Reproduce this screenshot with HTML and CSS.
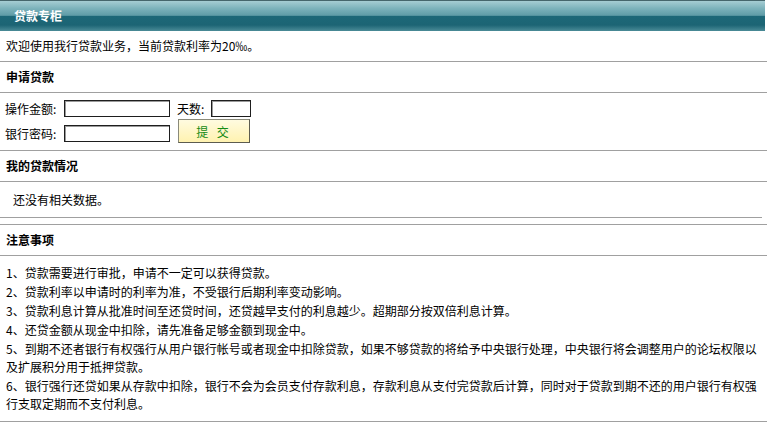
FILE: index.html
```html
<!DOCTYPE html>
<html lang="zh-CN">
<head>
    <meta charset="UTF-8">
    <title>贷款专柜</title>
    <link rel="stylesheet" href="styles.css">
</head>
<body>

<div class="panel">
    <div class="panel-head">贷款专柜</div>

    <div class="intro">欢迎使用我行贷款业务，当前贷款利率为20‰。</div>

    <div class="sec-title">申请贷款</div>
    <form class="loan-form">
        <div class="form-row">
            <label class="lbl">操作金额:</label>
            <input class="txt txt-amount" type="text">
            <label class="lbl-days">天数:</label>
            <input class="txt txt-days" type="text">
        </div>
        <div class="form-row row-submit">
            <label class="lbl">银行密码:</label>
            <input class="txt txt-amount" type="password">
            <button class="submit-btn" type="button">提 交</button>
        </div>
    </form>

    <div class="sec-title">我的贷款情况</div>
    <div class="empty">
        <p>还没有相关数据。</p>
    </div>

    <div class="sec-title sec-top">注意事项</div>
    <ul class="notes">
        <li>1、贷款需要进行审批，申请不一定可以获得贷款。</li>
        <li>2、贷款利率以申请时的利率为准，不受银行后期利率变动影响。</li>
        <li>3、贷款利息计算从批准时间至还贷时间，还贷越早支付的利息越少。超期部分按双倍利息计算。</li>
        <li>4、还贷金额从现金中扣除，请先准备足够金额到现金中。</li>
        <li>5、到期不还者银行有权强行从用户银行帐号或者现金中扣除贷款，如果不够贷款的将给予中央银行处理，中央银行将会调整用户的论坛权限以及扩展积分用于抵押贷款。</li>
        <li>6、银行强行还贷如果从存款中扣除，银行不会为会员支付存款利息，存款利息从支付完贷款后计算，同时对于贷款到期不还的用户银行有权强行支取定期而不支付利息。</li>
    </ul>
</div>

</body>
</html>
```

FILE: styles.css
```css
body {
    margin: 0;
    padding: 0;
    background-color: #fff;
    font-family: "Noto Sans CJK SC", sans-serif;
    font-size: 12px;
    color: #000;
}

.panel {
    width: 767px;
}

.panel-head {
    width: 751px;
    height: 30px;
    line-height: 30px;
    margin-right: 2px;
    padding-left: 14px;
    border-top: 1px solid #46666c;
    color: #fff;
    font-weight: bold;
    background: linear-gradient(#a6cdd3 0%, #7cb2bb 25%, #5f9ca7 48%, #1d6878 50%, #1c6474 80%, #4a8b97 100%);
}

.intro {
    height: 30px;
    line-height: 30px;
    padding-left: 6px;
    border-bottom: 1px solid #a0a0a0;
}

.sec-title {
    height: 30px;
    line-height: 30px;
    padding-left: 6px;
    font-weight: bold;
    border-bottom: 1px solid #a0a0a0;
}

.sec-top {
    margin-top: 6px;
    border-top: 1px solid #a0a0a0;
}

.loan-form {
    margin: 0;
    padding: 7px 0 7px 5px;
    border-bottom: 1px solid #a0a0a0;
}

.form-row {
    display: flex;
    align-items: center;
    height: 17px;
}

.row-submit {
    height: 24px;
    margin-top: 2px;
    align-items: flex-end;
}

.lbl {
    width: 59px;
    line-height: 17px;
}

.row-submit .lbl {
    margin-bottom: 1px;
}

.lbl-days {
    margin-left: 7px;
    width: 34px;
    line-height: 17px;
}

.txt {
    box-sizing: border-box;
    height: 17px;
    margin: 0;
    padding: 0 2px;
    border: 1px solid #1e1e1e;
    box-shadow: inset 1px 1px 0 #9a9a9a;
    font-size: 12px;
    background: #fff;
}

.txt-amount {
    width: 106px;
}

.row-submit .txt {
    margin-bottom: 1px;
}

.txt-days {
    width: 40px;
}

.submit-btn {
    box-sizing: border-box;
    width: 72px;
    height: 24px;
    margin-left: 8px;
    padding: 0;
    border: 1px solid #8a8a7a;
    border-right-color: #5c5c50;
    border-bottom-color: #5c5c50;
    background: linear-gradient(#fffbe0, #fff2b0);
    color: #138a13;
    font-family: "Noto Sans CJK SC", sans-serif;
    font-size: 12px;
    letter-spacing: 3px;
    cursor: pointer;
}

.empty p {
    margin: 0 5px 0 0;
    height: 35px;
    line-height: 35px;
    padding-left: 13px;
    border-bottom: 1px solid #a0a0a0;
}

.notes {
    list-style: none;
    margin: 0;
    padding: 8px 3px 7px 6px;
    border-bottom: 1px solid #a0a0a0;
}

.notes li {
    line-height: 18px;
    margin-bottom: 1px;
}
```
